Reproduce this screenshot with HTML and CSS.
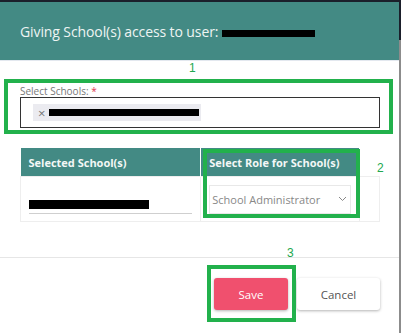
FILE: index.html
```html
<!DOCTYPE html>
<html>
<head>
  <title>School Access</title>
  <link rel="stylesheet" href="styles.css">
</head>
<body>
  <div class="frame">
    <div class="modal">
      <div class="modal-header">
        <span class="title">Giving School(s) access to user:</span>
        <span class="redact title-redact"></span>
      </div>

      <div class="modal-body">
        <label class="field-label">Select Schools: <span class="req">*</span></label>
        <div class="multi-select">
          <span class="chip"><span class="chip-x">&times;</span><span class="redact chip-redact"></span></span>
        </div>

        <table class="role-table">
          <thead>
            <tr>
              <th class="col-school">Selected School(s)</th>
              <th class="col-role">Select Role for School(s)</th>
              <th class="col-extra"></th>
            </tr>
          </thead>
          <tbody>
            <tr>
              <td>
                <div class="school-name"><span class="redact name-redact"></span></div>
              </td>
              <td>
                <div class="role-select">
                  <span>School Administrator</span>
                  <svg width="9" height="6" viewBox="0 0 9 6"><path d="M1 1l3.5 3.5L8 1" fill="none" stroke="#888" stroke-width="1"/></svg>
                </div>
              </td>
              <td></td>
            </tr>
          </tbody>
        </table>
      </div>

      <div class="modal-footer">
        <button type="button" class="btn btn-save">Save</button>
        <button type="button" class="btn btn-cancel">Cancel</button>
      </div>

      <!-- annotations drawn over the screenshot -->
      <span class="mark num num-1">1</span>
      <span class="mark num num-2">2</span>
      <span class="mark num num-3">3</span>
      <div class="mark box box-1"></div>
      <div class="mark box box-2"></div>
      <div class="mark box box-3"></div>
    </div>
    <div class="edge"></div>
  </div>
</body>
</html>
```

FILE: styles.css
```css
body {
  margin: 0;
  background: #1b1f2b;
  font-family: "Open Sans", "Liberation Sans", sans-serif;
}

.frame {
  display: flex;
  padding-top: 2px;
  height: 331px;
}

.modal {
  position: relative;
  width: 399px;
  height: 331px;
  background: #fff;
}

.edge {
  width: 2px;
  background: linear-gradient(#1b1f2b 38px, #8c8c8c 38px);
}

/* header */
.modal-header {
  background: #438a84;
  border-bottom: 1px solid #e3e8ef;
  display: flex;
  align-items: center;
  padding-left: 20px;
  box-sizing: border-box;
  height: 59px;
}

.title {
  color: #eef4f3;
  font-size: 14px;
  letter-spacing: -0.1px;
}

.redact {
  display: inline-block;
  background: #000;
}

.title-redact {
  width: 93px;
  height: 7px;
  margin-left: 4px;
  margin-top: 4px;
}

/* body */
.modal-body {
  padding: 24px 19px 35px 20px;
  border-bottom: 1px solid #e6e6e6;
}

.field-label {
  display: block;
  font-size: 10px;
  color: #777;
  line-height: 12px;
}

.req {
  color: #e0344f;
}

.multi-select {
  height: 31px;
  border: 1px solid #333;
  box-sizing: border-box;
  display: flex;
  align-items: center;
  padding-left: 12px;
}

.chip {
  display: flex;
  align-items: center;
  width: 168px;
  height: 17px;
  background: #ebebf0;
  box-sizing: border-box;
  padding-left: 5px;
}

.chip-x {
  color: #777;
  font-size: 13px;
  line-height: 12px;
}

.chip-redact {
  width: 150px;
  height: 7px;
  margin-left: 4px;
}

/* table */
.role-table {
  margin-top: 20px;
  width: 360px;
  border-collapse: collapse;
}

.role-table th {
  background: #438a84;
  color: #f3f7f6;
  font-size: 11px;
  font-weight: 700;
  text-align: left;
  height: 28px;
  padding: 0 8px;
  border-left: 1px solid #fff;
}

.role-table th:first-child {
  border-left: none;
}

.role-table th.col-extra {
  background: #fff;
}

.col-school {
  width: 164px;
}

.col-role {
  width: 142px;
}

.col-extra {
  width: 5px;
}

.role-table td {
  height: 44px;
  border: 1px solid #eeeeee;
  padding: 0 8px;
  vertical-align: middle;
}

.school-name {
  width: 163px;
  border-bottom: 1px solid #cfcfcf;
  height: 22px;
  margin-top: 6px;
}

.name-redact {
  width: 120px;
  height: 9px;
  margin-top: 9px;
}

.role-select {
  display: flex;
  align-items: center;
  justify-content: space-between;
  width: 142px;
  height: 29px;
  border: 1px solid #e8e8e8;
  box-sizing: border-box;
  padding: 0 3px 0 2px;
  font-size: 11px;
  color: #888;
}

/* footer */
.modal-footer {
  display: flex;
  justify-content: flex-end;
  gap: 9px;
  padding: 20px 19px 0 0;
}

.btn {
  height: 32px;
  border: none;
  border-radius: 3px;
  font-family: "Open Sans", "Liberation Sans", sans-serif;
  font-size: 11.5px;
  box-shadow: 0 1px 3px rgba(0, 0, 0, 0.3);
}

.btn-save {
  width: 74px;
  background: #f0506e;
  color: #fff;
}

.btn-cancel {
  width: 83px;
  background: #fff;
  color: #555;
}

/* annotations */
.mark {
  position: absolute;
}

.num {
  font-family: "Liberation Sans", sans-serif;
  font-size: 12px;
  color: #22a84f;
  line-height: 12px;
}

.num-1 { left: 189px; top: 60px; }
.num-2 { left: 377px; top: 160px; }
.num-3 { left: 287px; top: 245px; }

.box {
  border: 4px solid #22b14c;
  box-sizing: border-box;
}

.box-1 { left: 4px; top: 77px; width: 389px; height: 55px; }
.box-2 { left: 203px; top: 147px; width: 157px; height: 69px; }
.box-3 { left: 207px; top: 263px; width: 89px; height: 57px; }
```
